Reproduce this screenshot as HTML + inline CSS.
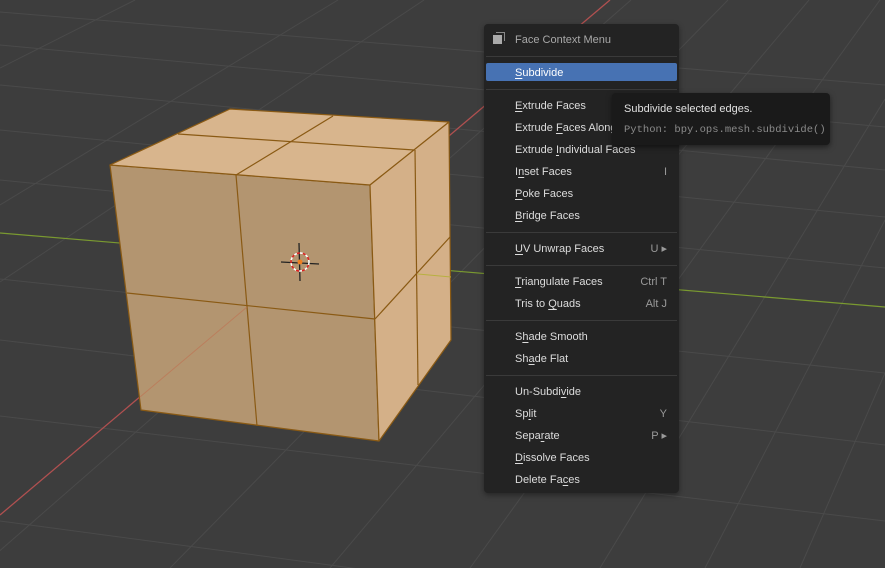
<!DOCTYPE html>
<html style="overflow:hidden;width:885px;height:568px"><head><style>
body{margin:0;width:885px;height:568px;overflow:hidden;background:#3d3d3d;font-family:"Liberation Sans","DejaVu Sans",sans-serif;position:relative}
svg{position:absolute;left:0;top:0;overflow:hidden}
.menu{position:absolute;left:484px;top:24px;width:195px;height:469px;background:#232323;border-radius:4px;box-shadow:0 2px 6px rgba(0,0,0,.4)}
.it{position:absolute;left:31px;font-size:11px;color:#dcdcdc;height:16px;line-height:16px}
.sc{position:absolute;right:12px;font-size:11px;color:#9a9a9a;line-height:16px}
.sep{position:absolute;left:2px;right:2px;height:1px;background:#3a3a3a}
.hl{position:absolute;left:2px;width:191px;top:39px;height:18px;background:#4772b3;border-radius:2px}
.tip{position:absolute;left:612px;top:93px;width:218px;height:52px;background:#1a1a1a;border-radius:4px;box-shadow:0 2px 6px rgba(0,0,0,.5)}
u{text-decoration:underline;text-underline-offset:2px}
</style></head><body>
<svg width="885" height="568" viewBox="0 0 885 568">
<g stroke="#4a4a4a" stroke-width="1" fill="none">
<line x1="0" y1="45" x2="885" y2="127"/><line x1="0" y1="85" x2="885" y2="170"/>
<line x1="0" y1="130" x2="885" y2="217"/><line x1="0" y1="180" x2="885" y2="268"/>
<line x1="0" y1="279" x2="885" y2="373"/><line x1="0" y1="340" x2="885" y2="445"/>
<line x1="0" y1="416" x2="885" y2="521"/><line x1="0" y1="521" x2="442" y2="580"/>
<line x1="0" y1="12" x2="885" y2="85"/>
<line x1="0" y1="68" x2="135" y2="0"/><line x1="0" y1="205" x2="338" y2="0"/>
<line x1="0" y1="282" x2="424" y2="0"/>
<line x1="-20" y1="568" x2="631" y2="0"/><line x1="170" y1="568" x2="728" y2="0"/>
<line x1="330" y1="568" x2="809" y2="0"/><line x1="470" y1="568" x2="880" y2="0"/>
<line x1="600" y1="568" x2="885" y2="99"/><line x1="705" y1="568" x2="885" y2="220"/>
<line x1="800" y1="568" x2="885" y2="373"/>
</g>
<line x1="0" y1="515" x2="610" y2="0" stroke="#b05050" stroke-width="1.3"/>
<line x1="0" y1="233" x2="885" y2="307" stroke="#7a9a30" stroke-width="1.2"/>
<g stroke="#8a5a14" stroke-width="1.2" stroke-linejoin="round">
<polygon points="110,165 370,185 379,441 141,410" fill="#b39570"/>
<polygon points="110,165 230,109 449,122 370,185" fill="#d8b58d"/>
<polygon points="370,185 449,122 451,340 379,441" fill="#d4b088"/>
<line x1="236" y1="175" x2="257" y2="426"/><line x1="127" y1="293" x2="375" y2="319"/>
<line x1="415" y1="150" x2="418" y2="385"/><line x1="375" y1="319" x2="450" y2="237"/>
<line x1="236" y1="175" x2="333" y2="116"/><line x1="178" y1="134" x2="414" y2="150"/>
</g>
<line x1="140" y1="397" x2="247" y2="307" stroke="#c07050" stroke-width="1" opacity=".6"/>
<line x1="418" y1="274" x2="451" y2="277" stroke="#b8b040" stroke-width="1"/>
<g stroke="#222" stroke-width="1.3"><line x1="299" y1="243" x2="300" y2="281"/><line x1="281" y1="262" x2="319" y2="264"/></g>
<circle cx="300" cy="262" r="9" fill="none" stroke="#fff" stroke-width="1.5" stroke-dasharray="3 3"/>
<circle cx="300" cy="262" r="9" fill="none" stroke="#e02020" stroke-width="1.5" stroke-dasharray="3 3" stroke-dashoffset="3"/>
<circle cx="300" cy="262" r="2.5" fill="#f08020"/>
</svg>
<div class="menu">
<div style="position:absolute;left:9px;top:11px;width:9px;height:9px;background:#aaa"></div>
<div style="position:absolute;left:12px;top:8px;width:8px;height:8px;border:1px solid #888;border-left:none;border-bottom:none"></div>
<div class="it" style="top:8px;color:#a8a8a8">Face Context Menu</div>
<div class="sep" style="top:32px"></div>
<div class="hl"></div>
<div class="it" style="top:41px;color:#fff"><u>S</u>ubdivide</div>
<div class="sep" style="top:65px"></div>
<div class="it" style="top:74px"><u>E</u>xtrude Faces</div><div class="sc" style="top:74px">E</div>
<div class="it" style="top:96px">Extrude <u>F</u>aces Along Normals</div>
<div class="it" style="top:118px">Extrude <u>I</u>ndividual Faces</div>
<div class="it" style="top:140px">I<u>n</u>set Faces</div><div class="sc" style="top:140px">I</div>
<div class="it" style="top:162px"><u>P</u>oke Faces</div>
<div class="it" style="top:184px"><u>B</u>ridge Faces</div>
<div class="sep" style="top:208px"></div>
<div class="it" style="top:217px"><u>U</u>V Unwrap Faces</div><div class="sc" style="top:217px">U ▸</div>
<div class="sep" style="top:241px"></div>
<div class="it" style="top:250px"><u>T</u>riangulate Faces</div><div class="sc" style="top:250px">Ctrl T</div>
<div class="it" style="top:272px">Tris to <u>Q</u>uads</div><div class="sc" style="top:272px">Alt J</div>
<div class="sep" style="top:296px"></div>
<div class="it" style="top:305px">S<u>h</u>ade Smooth</div>
<div class="it" style="top:327px">Sh<u>a</u>de Flat</div>
<div class="sep" style="top:351px"></div>
<div class="it" style="top:360px">Un-Subdi<u>v</u>ide</div>
<div class="it" style="top:382px">Sp<u>l</u>it</div><div class="sc" style="top:382px">Y</div>
<div class="it" style="top:404px">Sepa<u>r</u>ate</div><div class="sc" style="top:404px">P ▸</div>
<div class="it" style="top:426px"><u>D</u>issolve Faces</div>
<div class="it" style="top:448px">Delete Fa<u>c</u>es</div>
</div>
<div class="tip">
<div style="position:absolute;left:12px;top:10px;font-size:11px;color:#e0e0e0">Subdivide selected edges.</div>
<div style="position:absolute;left:12px;top:31px;font-size:10.5px;color:#8a8a8a;font-family:'Liberation Mono','DejaVu Sans Mono',monospace">Python: bpy.ops.mesh.subdivide()</div>
</div>
</body></html>
